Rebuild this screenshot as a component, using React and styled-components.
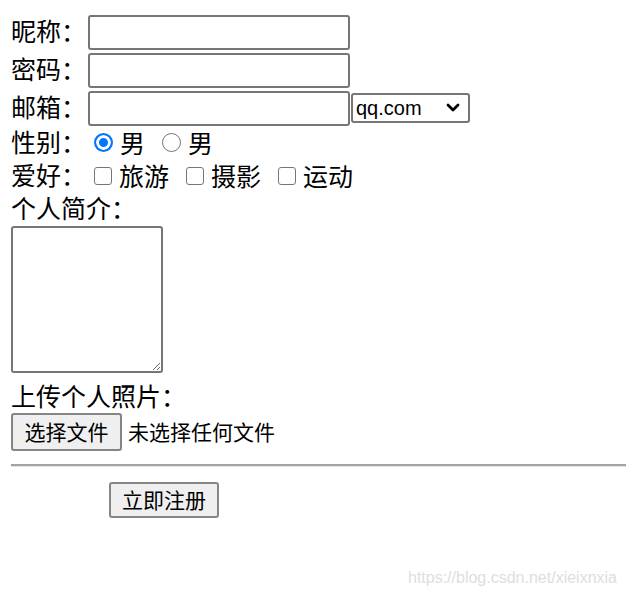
import React from 'react';
import styled, { createGlobalStyle } from 'styled-components';

const GlobalStyle = createGlobalStyle`
  html, body {
    margin: 0;
    padding: 0;
    background: #ffffff;
  }
  body {
    font-family: "Noto Sans CJK SC", "Liberation Sans", sans-serif;
    color: #000000;
  }
`;

const App = () => {
  return (
    <>
      <GlobalStyle />
      <Page>
        <Form onSubmit={e => e.preventDefault()}>
          <Row>
            <Label>昵称：</Label>
            <TextInput type="text" />
          </Row>
          <Row>
            <Label>密码：</Label>
            <TextInput type="password" />
          </Row>
          <Row>
            <Label>邮箱：</Label>
            <TextInput type="text" />
            <SelectWrap>
              <Select defaultValue="qq.com">
                <option>qq.com</option>
                <option>163.com</option>
                <option>sina.com</option>
              </Select>
              <Chevron viewBox="0 0 14 10">
                <path d="M2 2 L7 7 L12 2" />
              </Chevron>
            </SelectWrap>
          </Row>
          <Row $h={33}>
            <Label>性别：</Label>
            <Choice $first={6}>
              <Radio type="radio" name="sex" defaultChecked />
              <ChoiceText>男</ChoiceText>
            </Choice>
            <Choice>
              <Radio type="radio" name="sex" />
              <ChoiceText>男</ChoiceText>
            </Choice>
          </Row>
          <Row $h={33}>
            <Label>爱好：</Label>
            <Choice $first={6}>
              <Check type="checkbox" />
              <ChoiceText>旅游</ChoiceText>
            </Choice>
            <Choice>
              <Check type="checkbox" />
              <ChoiceText>摄影</ChoiceText>
            </Choice>
            <Choice>
              <Check type="checkbox" />
              <ChoiceText>运动</ChoiceText>
            </Choice>
          </Row>
          <Row $h={33}>
            <Label>个人简介：</Label>
          </Row>
          <TextArea />
          <Row $h={32} $top={8}>
            <Label>上传个人照片：</Label>
          </Row>
          <FileRow>
            <Button type="button" $w={111} $h={38}>选择文件</Button>
            <FileName>未选择任何文件</FileName>
          </FileRow>
          <Rule />
          <SubmitRow>
            <Button type="submit" $w={110} $h={36}>立即注册</Button>
          </SubmitRow>
        </Form>
        <Watermark>https://blog.csdn.net/xieixnxia</Watermark>
      </Page>
    </>
  );
};

export default App;

const Page = styled.div`
  position: relative;
  width: 626px;
  height: 596px;
  overflow: hidden;
  box-sizing: border-box;
  padding: 13px 0 0 11px;
`;

const Form = styled.form`
  display: flex;
  flex-direction: column;
  align-items: flex-start;
`;

const Row = styled.div`
  display: flex;
  align-items: center;
  height: ${p => p.$h || 38}px;
  margin-top: ${p => p.$top || 0}px;
  font-size: 25px;
  line-height: 1;
`;

const Label = styled.span`
  width: 75px;
  margin-right: 2px;
  padding-bottom: 4px;
  white-space: nowrap;
`;

const TextInput = styled.input`
  box-sizing: border-box;
  width: 262px;
  height: 35px;
  margin: 0;
  padding: 1px 4px;
  border: 2px solid #767676;
  border-radius: 3px;
  font-size: 20px;
  font-family: "Liberation Sans", sans-serif;
  outline: none;
`;

const SelectWrap = styled.div`
  position: relative;
  display: flex;
  margin-left: 1px;
`;

const Select = styled.select`
  appearance: none;
  box-sizing: border-box;
  width: 119px;
  height: 30px;
  margin: 0;
  padding: 0 0 0 3px;
  border: 2px solid #767676;
  border-radius: 3px;
  background: #ffffff;
  color: #000000;
  font-size: 20px;
  font-family: "Liberation Sans", sans-serif;
  outline: none;
`;

const Chevron = styled.svg`
  position: absolute;
  right: 10px;
  top: 10px;
  width: 14px;
  height: 10px;
  pointer-events: none;
  fill: none;
  stroke: #000000;
  stroke-width: 2.8;
  stroke-linecap: round;
  stroke-linejoin: round;
`;

const Choice = styled.label`
  display: flex;
  align-items: center;
  gap: 7px;
  margin-left: ${p => p.$first || 17}px;
`;

const ChoiceText = styled.span`
  padding-bottom: 3px;
`;

const Radio = styled.input`
  appearance: none;
  box-sizing: border-box;
  width: 19px;
  height: 19px;
  margin: 0 0 2px 0;
  border: 1.6px solid #767676;
  border-radius: 50%;
  background: #ffffff;

  &:checked {
    border: 2px solid #0075ff;
    background: #0075ff;
    box-shadow: inset 0 0 0 3px #ffffff;
  }
`;

const Check = styled.input`
  appearance: none;
  box-sizing: border-box;
  width: 18px;
  height: 18px;
  margin: 0 0 2px 0;
  border: 1.6px solid #767676;
  border-radius: 3px;
  background: #ffffff;
`;

const TextArea = styled.textarea`
  display: block;
  box-sizing: border-box;
  width: 152px;
  height: 147px;
  margin: 0;
  padding: 3px;
  border: 2px solid #767676;
  border-radius: 3px;
  outline: none;
  resize: both;
`;

const FileRow = styled.div`
  display: flex;
  align-items: center;
  height: 38px;
`;

const Button = styled.button`
  box-sizing: border-box;
  width: ${p => p.$w}px;
  height: ${p => p.$h}px;
  margin: 0;
  padding: 0 0 2px 0;
  border: 2px solid #858585;
  border-radius: 3px;
  background: #efefef;
  color: #000000;
  font-size: 21px;
  font-family: "Noto Sans CJK SC", sans-serif;
  line-height: 1;
`;

const FileName = styled.span`
  margin-left: 6px;
  padding-bottom: 2px;
  font-size: 21px;
  line-height: 1;
`;

const Rule = styled.hr`
  align-self: stretch;
  box-sizing: border-box;
  height: 3px;
  margin: 13px 0 0 0;
  border: none;
  border-top: 2px solid #a3a3a3;
  border-bottom: 1px solid #e4e4e4;
`;

const SubmitRow = styled.div`
  display: flex;
  margin-top: 15px;
  padding-left: 98px;
`;

const Watermark = styled.div`
  position: absolute;
  right: 9px;
  bottom: 9px;
  font-size: 16px;
  font-family: "Liberation Sans", sans-serif;
  color: #dedede;
`;
